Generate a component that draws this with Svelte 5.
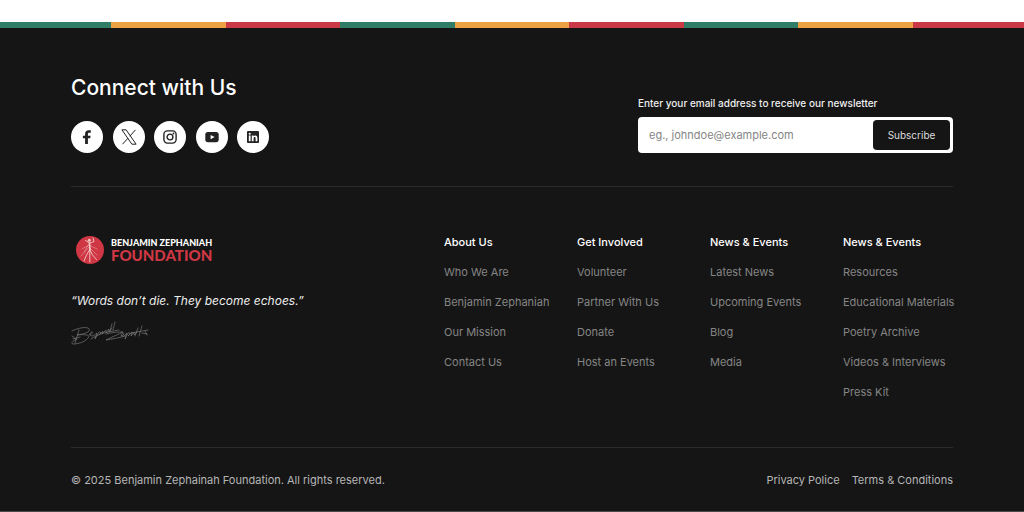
<script>
  const stripes = Array.from({ length: 9 }, (_, i) => ['green', 'amber', 'red'][i % 3]);
  const columns = [
    { title: 'About Us', links: ['Who We Are', 'Benjamin Zephaniah', 'Our Mission', 'Contact Us'] },
    { title: 'Get Involved', links: ['Volunteer', 'Partner With Us', 'Donate', 'Host an Events'] },
    { title: 'News & Events', links: ['Latest News', 'Upcoming Events', 'Blog', 'Media'] },
    {
      title: 'News & Events',
      links: ['Resources', 'Educational Materials', 'Poetry Archive', 'Videos & Interviews', 'Press Kit'],
    },
  ];
  let email = $state('');
</script>

<div class="stripes" aria-hidden="true">
  {#each stripes as color}
    <span class={color}></span>
  {/each}
</div>

<footer>
  <section class="top">
    <div>
      <h2>Connect with Us</h2>
      <nav class="social" aria-label="Social media">
        <a href="#facebook" aria-label="Facebook">
          <svg viewBox="0 0 16 16"><path fill="#222" d="M6.100 15V9.300H3.900V6.700h2.200V4.900c0-2.500 1.400-3.700 3.600-3.700.9 0 1.800.1 2.100.15v2.400h-1.500c-1.100 0-1.400.6-1.400 1.300V6.700h2.700l-.4 2.600H8.900V15z" /></svg>
        </a>
        <a href="#x" aria-label="X">
          <svg viewBox="0 0 16 16"><path fill="none" stroke="#222" stroke-width="1" d="M.9.8h4.200l10 14.400h-4.200zM14.500.8 8.800 7.200M7.100 9.100 1.500 15.200" /></svg>
        </a>
        <a href="#instagram" aria-label="Instagram">
          <svg viewBox="0 0 16 16"><rect x="1.900" y="1.900" width="12.200" height="12.200" rx="3.500" fill="none" stroke="#222" stroke-width="1.400" /><circle cx="8" cy="8" r="2.900" fill="none" stroke="#222" stroke-width="1.400" /><circle cx="11.500" cy="4.500" r=".9" fill="#222" /></svg>
        </a>
        <a href="#youtube" aria-label="YouTube">
          <svg viewBox="0 0 16 16"><rect x="1.300" y="2.900" width="13.400" height="10.400" rx="2.700" fill="#222" /><path fill="#fff" d="m6.600 5.900 4 2.200-4 2.200z" /></svg>
        </a>
        <a href="#linkedin" aria-label="LinkedIn">
          <svg viewBox="0 0 16 16"><rect x="2" y="2" width="12" height="12" rx="1" fill="#222" /><path fill="#fff" d="M3.800 6.600h1.800v5.600H3.800zM6.800 6.600h1.700v.8c.4-.6 1-.95 1.800-.95 1.500 0 2.100.95 2.100 2.600v3.150h-1.800V9.400c0-.8-.2-1.350-.9-1.350-.8 0-1.100.6-1.100 1.350v2.800H6.800z" /><circle cx="4.700" cy="4.700" r="1.050" fill="#fff" /></svg>
        </a>
      </nav>
    </div>
    <form onsubmit={(e) => e.preventDefault()}>
      <label for="email">Enter your email address to receive our newsletter</label>
      <div class="field">
        <input id="email" type="email" placeholder="eg., johndoe@example.com" bind:value={email} />
        <button type="submit">Subscribe</button>
      </div>
    </form>
  </section>

  <section class="middle">
    <div class="brand">
      <div class="logo">
        <svg viewBox="0 0 28 28" aria-hidden="true">
          <circle cx="14" cy="14" r="14" fill="#d03744" />
          <g fill="none" stroke="#f2c9c5" stroke-linecap="round" stroke-linejoin="round">
            <path stroke-width="1.600" d="m13.500 7 .5 7" />
            <path stroke-width=".9" d="m13.500 7-4-2.500M14 7l4-1.500-1-3.500M13.500 14l-3 5-2.500 6M14 14l2.500 5 4 4.500M13.800 12v14" />
            <path stroke-width=".6" opacity=".7" d="m6 13 7-4 8 4M5 20l8-9 8 8M13 8l-5 8" />
          </g>
          <circle cx="13.300" cy="4.300" r="1.500" fill="#f2c9c5" />
        </svg>
        <div>
          <span class="name">BENJAMIN ZEPHANIAH</span>
          <span class="kind">FOUNDATION</span>
        </div>
      </div>
      <p class="quote">“Words don’t die. They become echoes.”</p>
      <svg class="signature" viewBox="0 0 78 26" role="img" aria-label="Signature of Benjamin Zephaniah">
        <g fill="none" stroke="#777" stroke-width=".7" stroke-linecap="round" stroke-linejoin="round">
          <path d="M1 10c6-3 15-5 17-2 2 3-5 5-12 6 8-1 14 0 11 3-3 4-10 6-15 6-3-1 0-3 4-5M8 9 4 22M1 15l4 3M2 18l7-2" />
          <path d="M18 14c3-1 5-3 3-3s-3 4 0 4 4-3 5-3l-2 6 4-7c2-1 2 2 0 3l4-4-1 3 4-4v3l3-4v3l3-4M41 3l-2 7M44 1l-2 8M20 18c7-5 15-7 28-9" />
          <path d="M35 13c6-2 13-2 17-2-4 2-11 5-17 8 6-1 13-2 19-4M50 15c3-1 4-3 2-3s-3 4 1 3l3-3-2 6 3-6c3-1 2 2 0 3l4-4-1 4 3-4v3l3-3M67 7l-3 8M71 5l-3 10M60 12l17-3M71 12l5 1M74 10l2 4" />
        </g>
      </svg>
    </div>
    <nav class="links" aria-label="Footer">
      {#each columns as column}
        <div>
          <h3>{column.title}</h3>
          <ul>
            {#each column.links as link}
              <li><a href="#page">{link}</a></li>
            {/each}
          </ul>
        </div>
      {/each}
    </nav>
  </section>

  <section class="bottom">
    <p>© 2025 Benjamin Zephainah Foundation. All rights reserved.</p>
    <nav aria-label="Legal">
      <a href="#privacy">Privacy Police</a>
      <a href="#terms">Terms &amp; Conditions</a>
    </nav>
  </section>
</footer>

<style>
  :global(body) {
    margin: 0;
    background: #fff;
    font-family: Inter, sans-serif;
    font-size: 11px;
    line-height: 16px;
  }
  h2, h3, p, ul {
    margin: 0;
    padding: 0;
  }
  ul {
    list-style: none;
  }
  a {
    color: inherit;
    text-decoration: none;
  }
  .stripes {
    display: flex;
    justify-content: center;
    height: 6px;
    margin-top: 22px;
    overflow: hidden;
  }
  .stripes span {
    flex: 0 0 11.18%;
  }
  .green { background: #2f7d66; }
  .amber { background: #eba144; }
  .red { background: #cb3846; }
  footer {
    padding: 0 71px;
    background: #151515;
    border-bottom: 1px solid #4a4a4a;
    color: #fff;
  }
  .top {
    display: flex;
    justify-content: space-between;
    align-items: flex-end;
    padding: 46px 0 33px;
    border-bottom: 1px solid #2a2a2a;
  }
  h2 {
    font-size: 21px;
    line-height: 28px;
    font-weight: 500;
  }
  .social {
    display: flex;
    justify-content: space-between;
    width: 198px;
    margin-top: 19px;
  }
  .social a {
    display: grid;
    place-items: center;
    width: 32px;
    height: 32px;
    border-radius: 50%;
    background: #fff;
  }
  .social svg {
    width: 16px;
    height: 16px;
  }
  form {
    width: 315px;
  }
  label {
    display: block;
    margin-bottom: 6px;
    font-size: 10px;
    font-weight: 500;
    color: #eee;
  }
  .field {
    display: flex;
    box-sizing: border-box;
    height: 36px;
    padding: 3px;
    border-radius: 4px;
    background: #fff;
  }
  input {
    flex: 1;
    min-width: 0;
    padding: 0 8px;
    border: 0;
    background: transparent;
    font: inherit;
    color: #151515;
  }
  input::placeholder {
    color: #858585;
  }
  button {
    width: 77px;
    padding: 0;
    border: 0;
    border-radius: 4px;
    background: #151515;
    color: #ddd;
    font: inherit;
    font-size: 10px;
  }
  .middle {
    display: flex;
    justify-content: space-between;
    padding: 47px 0;
    border-bottom: 1px solid #2a2a2a;
  }
  .brand svg {
    display: block;
  }
  .logo {
    display: flex;
    align-items: center;
    gap: 7px;
    height: 32px;
    padding-left: 5px;
    font-family: Lato, sans-serif;
    font-weight: 900;
    white-space: nowrap;
  }
  .logo svg {
    width: 28px;
    height: 28px;
  }
  .name, .kind {
    display: block;
  }
  .name {
    font-size: 9px;
    line-height: 10px;
  }
  .kind {
    font-size: 15px;
    line-height: 14px;
    color: #d03744;
  }
  .quote {
    margin: 27px 0 12px;
    font-size: 12px;
    font-style: italic;
    color: #eee;
  }
  .signature {
    width: 78px;
    height: 26px;
  }
  .links {
    display: grid;
    grid-template-columns: repeat(3, 133px) 110px;
    white-space: nowrap;
  }
  h3 {
    font-size: 11px;
    line-height: 16px;
    font-weight: 500;
  }
  li {
    margin-top: 14px;
    color: #858585;
  }
  .bottom, .bottom nav {
    display: flex;
    justify-content: space-between;
    gap: 12px;
  }
  .bottom {
    padding: 24px 0 23px;
    color: #b5b5b5;
  }
</style>
